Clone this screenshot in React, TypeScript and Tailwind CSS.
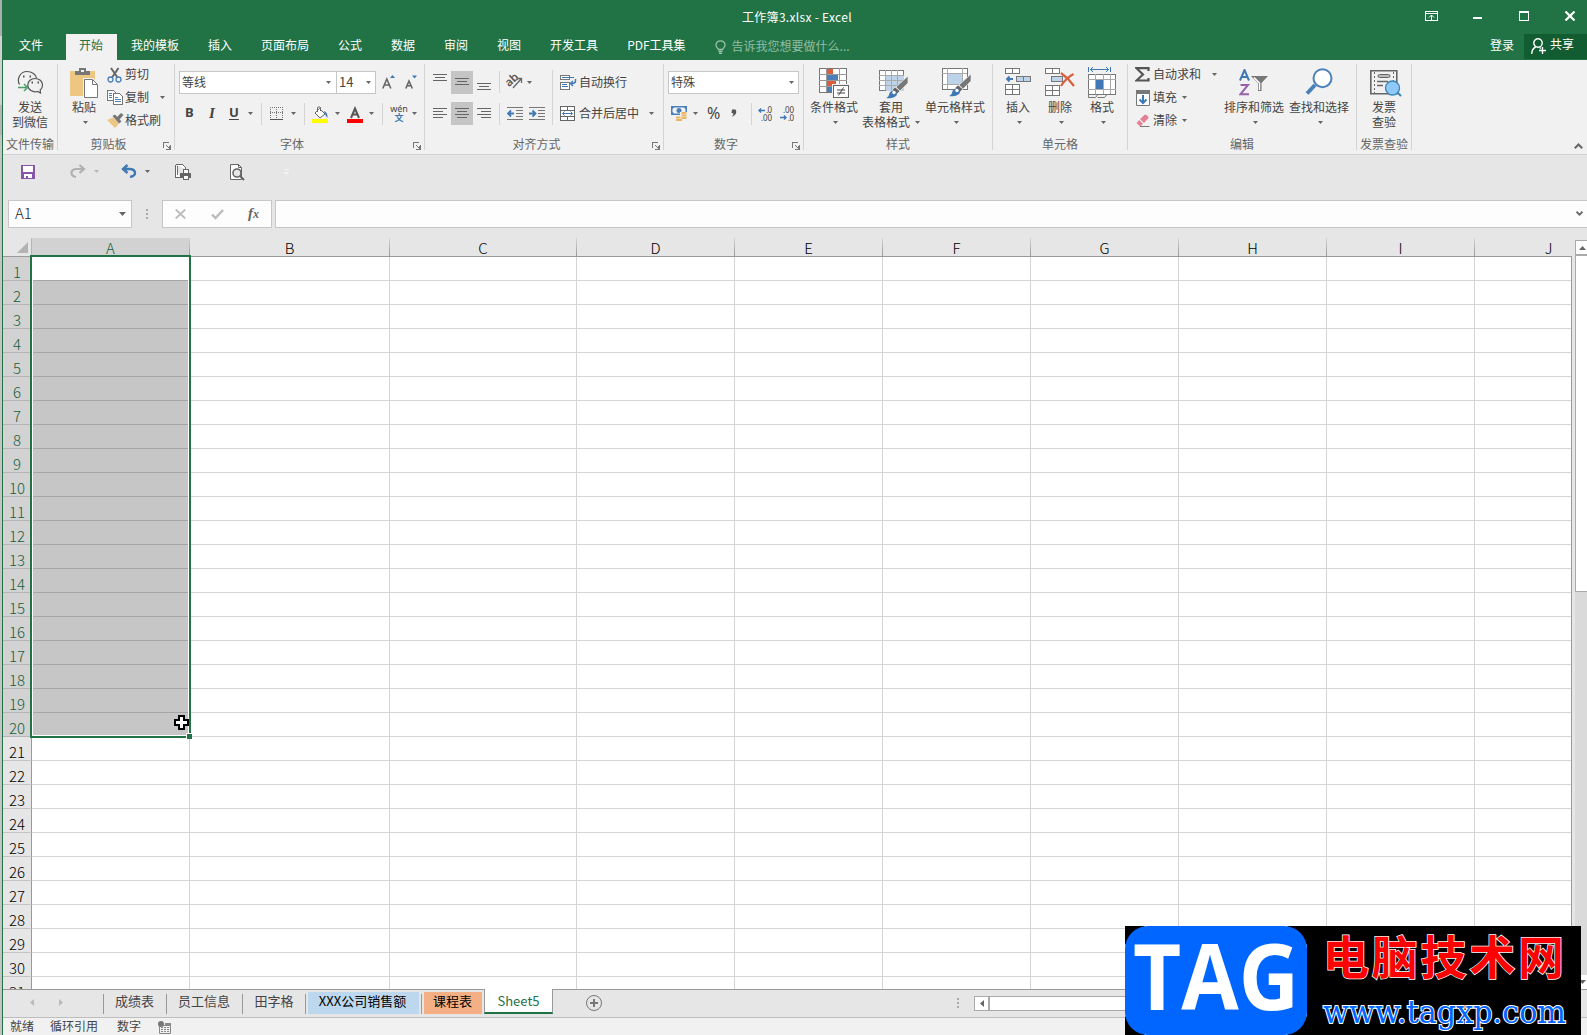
import React from 'react';

const FILE_TABS = ['我的模板', '插入', '页面布局', '公式', '数据', '审阅', '视图', '开发工具', 'PDF工具集'];

const COLUMNS = [
  { name: 'A', width: 158 },
  { name: 'B', width: 200 },
  { name: 'C', width: 187 },
  { name: 'D', width: 158 },
  { name: 'E', width: 148 },
  { name: 'F', width: 148 },
  { name: 'G', width: 148 },
  { name: 'H', width: 148 },
  { name: 'I', width: 148 },
  { name: 'J', width: 148 },
];

const ROWS = Array.from({ length: 31 }, (_, i) => i + 1);
const SELECTED_ROWS = 20;

/* ---------- small shared parts ---------- */

const Caret = ({ className = '', color = '#666' }: { className?: string; color?: string }) => (
  <svg className={`shrink-0 ${className}`} width="5" height="3" viewBox="0 0 5 3">
    <path d="M0 0h5L2.5 3z" fill={color} />
  </svg>
);

const Divider = ({ className = '' }: { className?: string }) => (
  <div className={`w-px shrink-0 bg-[#d4d4d4] ${className}`} />
);

const Launcher = () => (
  <svg width="8" height="8" viewBox="0 0 8 8" fill="none" stroke="#777" shapeRendering="crispEdges">
    <path d="M.5 6V.5H6M7.5 3v4.5H3M3.5 3.5l3 3M6.5 4v3H4" />
  </svg>
);

interface GroupProps {
  label: string;
  className: string;
  launcher?: boolean;
  labelShift?: string;
  children: React.ReactNode;
}

const Group = ({ label, className, launcher, labelShift = '', children }: GroupProps) => (
  <div className={`flex shrink-0 ${className}`}>
    <div className="flex min-w-0 flex-1 flex-col">
      <div className="flex h-[73px] items-start">{children}</div>
      <div className="flex h-[21px] items-center">
        <div className={`flex-1 whitespace-nowrap text-center leading-5 text-[#666] ${labelShift}`}>{label}</div>
        {launcher && (
          <div className="-ml-3 mr-[3px] mt-[5px] w-2">
            <Launcher />
          </div>
        )}
      </div>
    </div>
    <Divider className="mt-1 h-[86px]" />
  </div>
);

interface BigButtonProps {
  icon: React.ReactNode;
  line1: string;
  line2?: string;
  caret?: boolean;
  className: string;
}

const BigButton = ({ icon, line1, line2, caret, className }: BigButtonProps) => (
  <div className={`flex shrink-0 flex-col items-center ${className}`}>
    <div className="flex h-[39px] items-start justify-center">{icon}</div>
    <div className="h-[15px] whitespace-nowrap leading-[15px]">{line1}</div>
    <div className="flex h-[17px] items-center whitespace-nowrap leading-[15px]">
      {line2 && <span className="mb-[2px]">{line2}</span>}
      {caret && <Caret className={line2 ? 'ml-[5px]' : 'ml-[2px]'} />}
    </div>
  </div>
);

const SmallButton = ({ icon, text, children }: { icon: React.ReactNode; text: string; children?: React.ReactNode }) => (
  <div className="flex h-[23px] items-center whitespace-nowrap">
    <div className="flex w-[18px] shrink-0">{icon}</div>
    <span className="mb-[2px]">{text}</span>
    {children}
  </div>
);

/* ---------- ribbon icons ---------- */

const WechatIcon = () => (
  <svg className="mt-[10px]" width="27" height="24" viewBox="0 0 27 24" fill="none" stroke="#555">
    <path d="M2.5 14.5C-.5 9 3 1.5 10 1.5c5 0 9 3 9.500 6.500" strokeWidth="1.200" />
    <path d="M25.500 15c0 2-.8 3.800-2.300 5l.3 3-3-1.500c-4.500 1.300-9.700-1.500-9.700-6.500 0-4 3.300-6.500 7.300-6.500s7.400 2.700 7.400 6.500z" fill="#f1f1f1" strokeWidth="1.200" />
    <path d="M6 6.500h1.500M12.500 6.500H14M14.500 12.500H16M20.500 12.500H22" strokeWidth="1.800" />
    <path d="M1 17.500h9M7 14l3.500 3.500L7 21" stroke="#4ba06a" strokeWidth="1.500" />
  </svg>
);

const PasteIcon = () => (
  <svg className="mt-2" width="29" height="31" viewBox="0 0 29 31">
    <path d="M0 3h25v25H0z" fill="#edc682" />
    <path d="M5 3h4V0h7v3h4v4H5z" fill="#777" />
    <path d="M11 2h3v2h-3z" fill="#f1f1f1" />
    <path d="M13 10h10l6 6v15H13z" fill="#f1f1f1" />
    <path d="M14.500 11.500h8l5 5v13h-13z" fill="#fff" stroke="#777" />
    <path d="M22.500 11.500v5h5" fill="none" stroke="#777" />
  </svg>
);

const CutIcon = () => (
  <svg width="16" height="16" viewBox="0 0 16 16" fill="none">
    <path d="M4 1l6.500 9.500M11.500 1L5 10.500" stroke="#666" strokeWidth="2" />
    <circle cx="3.500" cy="12.500" r="2.500" stroke="#4a7fb8" strokeWidth="1.300" />
    <circle cx="11.500" cy="12.500" r="2.500" stroke="#4a7fb8" strokeWidth="1.300" />
  </svg>
);

const CopyIcon = () => (
  <svg width="16" height="15" viewBox="0 0 16 15" shapeRendering="crispEdges">
    <path d="M.5 .5h6l2 2v8h-8z" fill="#fff" stroke="#777" />
    <path d="M2 3.500h3M2 5.500h3M2 7.500h3" stroke="#4a7fb8" />
    <path d="M6.500 3.500h6l3 3v8h-9z" fill="#fff" stroke="#777" />
    <path d="M8 7.500h3M8 9.500h6M8 11.500h6" stroke="#4a7fb8" />
  </svg>
);

const PainterIcon = () => (
  <svg width="17" height="15" viewBox="0 0 17 15">
    <path d="M0 7l6-2.500 6 6L8 15z" fill="#edc682" />
    <path d="M5.500 3l2.500-1.500 6.500 7-2.500 2zM10 4l4-4 2.500 2-4 4.500z" fill="#777" />
  </svg>
);

const BordersIcon = () => (
  <svg width="13" height="13" viewBox="0 0 13 13" fill="none" stroke="#777" shapeRendering="crispEdges">
    <path d="M0 .5h13M.5 0v11M6.500 0v11M12.500 0v11M0 5.500h13" strokeDasharray="1 1" />
    <path d="M0 12.500h13" stroke="#555" />
  </svg>
);

const FillIcon = () => (
  <svg width="17" height="17" viewBox="0 0 17 17">
    <path d="M7.500 2.500l5.500 5.500-5 4-5-5z" fill="#fff" stroke="#666" />
    <path d="M5.500 6V1.500q1.500-1.500 3 0V5" fill="none" stroke="#666" />
    <path d="M11.500 5q4.500 1 4 7-2-1.500-2.500-4.500z" fill="#3f78b5" />
    <path d="M0 13h16v4H0z" fill="#ff0" />
  </svg>
);

const FontColorIcon = () => (
  <svg width="16" height="17" viewBox="0 0 16 17">
    <path d="M4 12L8 2.500 12 12M5.500 8.500h5" fill="none" stroke="#555" strokeWidth="2" />
    <path d="M0 13h16v4H0z" fill="#f00" />
  </svg>
);

const GrowFontIcon = ({ up }: { up?: boolean }) => (
  <svg width="13" height="14" viewBox="0 0 13 14">
    {up ? (
      <>
        <path d="M.8 13.500L4.800 4l4 9.500M2.500 10h4.700" fill="none" stroke="#666" strokeWidth="1.600" />
        <path d="M8 3l2.500-3L13 3z" fill="#3f78b5" />
      </>
    ) : (
      <>
        <path d="M.8 13.500L4 6l3.300 7.500M2 10.700h4" fill="none" stroke="#666" strokeWidth="1.600" />
        <path d="M7 .5h5l-2.500 3z" fill="#3f78b5" />
      </>
    )}
  </svg>
);

// Paragraph lines, "d" sets which of them are short and on which side
const Lines = ({ d, h = 11 }: { d: string; h?: number }) => (
  <svg className="shrink-0" width="14" height={h} viewBox={`0 0 14 ${h}`} stroke="#666" shapeRendering="crispEdges">
    <path d={d} />
  </svg>
);

const OrientationIcon = () => (
  <svg className="overflow-visible" width="17" height="16" viewBox="0 0 17 16" fill="none">
    <text x="0" y="11.500" fontSize="11.500" fill="#555" fontWeight="600" transform="rotate(-42 5 9)" fontFamily="Noto Sans">
      ab
    </text>
    <path d="M7 15l8-9M15.500 10V5.500H11" stroke="#666" strokeWidth="1.300" />
  </svg>
);

const IndentIcon = ({ right }: { right?: boolean }) => (
  <svg width="16" height="13" viewBox="0 0 16 13" fill="none">
    <path d="M0 .5h16M9 3.500h7M9 6.500h7M9 9.500h7M0 12.500h16" stroke="#777" shapeRendering="crispEdges" />
    <path d={right ? 'M0 6.500h6M3.500 3.500l3 3-3 3' : 'M7 6.500H1M4 3.500l-3 3 3 3'} stroke="#3f78b5" strokeWidth="1.800" />
  </svg>
);

const WrapIcon = () => (
  <svg width="17" height="16" viewBox="0 0 17 16" fill="none">
    <g shapeRendering="crispEdges">
      <path d="M.5 .5h9v4h-9zM.5 7.500h9v7h-9z" fill="#fff" stroke="#777" />
      <path d="M2 2.500h12M2 9.500h5M2 11.500h6" stroke="#3f78b5" />
    </g>
    <path d="M15.500 4v2q0 2.500-4 2.500M13 6l-2.500 2.500L13 11" stroke="#3f78b5" strokeWidth="1.500" />
  </svg>
);

const MergeIcon = () => (
  <svg width="15" height="15" viewBox="0 0 15 15" fill="none">
    <path d="M.5 .5h14v14H.5zM.5 4.500h14M.5 10.500h14M7.500 0v4M7.500 11v4" fill="#fff" stroke="#666" shapeRendering="crispEdges" />
    <path d="M2.500 7.500h10M4.500 5.500l-2 2 2 2M10.500 5.500l2 2-2 2" stroke="#3f78b5" />
  </svg>
);

const CurrencyIcon = () => (
  <svg width="17" height="16" viewBox="0 0 17 16">
    <path d="M0 0h16v9H0z" fill="#4a7fb8" />
    <path d="M3 1.500h10l1.500 1.500v3L13 7.500H3L1.500 6V3z" fill="#f1f1f1" />
    <circle cx="8" cy="4.500" r="2.500" fill="#4a7fb8" />
    <path d="M9 6h8v9h-4v1H4v-5h5z" fill="#f1f1f1" />
    <path d="M10.500 7h5M10.500 9.500h5M10.500 12h5M5 11.500h4.500M5 14h6" stroke="#eab766" strokeWidth="1.900" />
  </svg>
);

const DecimalIcon = ({ less }: { less?: boolean }) => (
  <svg className="overflow-visible" width="16" height="14" viewBox="0 0 16 14" fontSize="8" fill="#444" fontFamily="Noto Sans">
    <text x={less ? 3 : 8} y="6" textLength={less ? 11 : 6}>
      {less ? '.00' : '.0'}
    </text>
    <text x={less ? 8 : 3} y="13.500" textLength={less ? 6 : 11}>
      {less ? '.0' : '.00'}
    </text>
    <path d={less ? 'M0 10.500h6M4 8.500l2 2-2 2' : 'M7 3.500H1M3 1.500l-2 2 2 2'} fill="none" stroke="#3f78b5" strokeWidth="1.400" />
  </svg>
);

const ConditionalIcon = () => (
  <svg className="mt-2" width="31" height="31" viewBox="0 0 31 31" shapeRendering="crispEdges">
    <path d="M.5 .5h27v24H.5z" fill="#fff" stroke="#777" />
    <path d="M8 .5h6v6H8zM8 13h9v5H8z" fill="#d9603f" />
    <path d="M8 7h11v5H8zM8 19h6v5H8z" fill="#4a7fb8" />
    <path d="M0 6.500h28M0 12.500h28M0 18.500h28M7.500 0v24M20.500 0v24" stroke="#999" />
    <path d="M13 16h18v15H13z" fill="#f1f1f1" />
    <path d="M14.500 17.500h15v12h-15z" fill="#fff" stroke="#666" />
    <path d="M18 22h8M18 25h8M24.500 19.500l-5 8" stroke="#444" shapeRendering="auto" />
  </svg>
);

const Brush = () => (
  <>
    <path d="M29 6v7l-8 8-4-4z" fill="#777" stroke="#f1f1f1" strokeWidth=".7" />
    <path d="M16 17l5 4-3 3-5-4z" fill="#666" stroke="#f1f1f1" strokeWidth=".7" />
    <path d="M7 28q3-1 3.500-5 3-4 6-1.500 3.500 3-1 5.500-3.500 2-8.500 1z" fill="#3f78b5" />
    <circle cx="15" cy="22.500" r="1.700" fill="#fff" />
  </>
);

const TableStyleIcon = () => (
  <svg className="ml-[5px] mt-[10px]" width="30" height="29" viewBox="0 0 30 29">
    <g shapeRendering="crispEdges">
      <path d="M.5 .5h24v20H.5z" fill="#fff" stroke="#777" />
      <path d="M7 6h18v15H7z" fill="#bdd3ea" />
      <path d="M0 5.500h25M0 10.500h25M0 15.500h25M6.500 0v20M12.500 0v20M18.500 0v20" stroke="#aaa" />
    </g>
    <Brush />
  </svg>
);

const CellStyleIcon = () => (
  <svg className="ml-[4px] mt-2" width="30" height="30" viewBox="0 0 30 30">
    <g shapeRendering="crispEdges">
      <path d="M.5 .5h25v21H.5z" fill="#fff" stroke="#777" />
      <path d="M0 5.500h25M0 16.500h25M5.500 0v21M20.500 0v21" stroke="#aaa" />
      <path d="M6 6h14v10H6z" fill="#bdd3ea" />
    </g>
    <Brush />
  </svg>
);

const InsertIcon = () => (
  <svg className="mt-2" width="27" height="28" viewBox="0 0 27 28">
    <g shapeRendering="crispEdges" fill="#fff" stroke="#777">
      <path d="M.5 .5h14v5H.5zM7.500 0v5M.5 16.500h14v10H.5zM7.500 16v10M0 21.500h14" />
      <path d="M11.500 8.500h14v5h-14zM18.500 8v5" fill="#bdd3ea" />
    </g>
    <path d="M8 11H2M4.500 8.500L2 11l2.500 2.500" fill="none" stroke="#3f78b5" strokeWidth="1.800" />
  </svg>
);

const DeleteIcon = () => (
  <svg className="mt-2" width="30" height="28" viewBox="0 0 30 28">
    <g shapeRendering="crispEdges" fill="#fff" stroke="#777">
      <path d="M.5 .5h14v5H.5zM7.500 0v5M.5 17.500h14v10H.5zM7.500 17v10M0 22.500h14" />
      <path d="M6.500 8.500h11v5h-11z" fill="#bdd3ea" />
    </g>
    <path d="M16 5q7 5 13 13M28.500 6Q21 10 16 18" fill="none" stroke="#d9603f" strokeWidth="2.200" />
  </svg>
);

const FormatIcon = () => (
  <svg className="mt-[7px]" width="29" height="31" viewBox="0 0 29 31">
    <path d="M.5 0v5M22.500 0v5M2 2.500h19M5 0L2.500 2.500 5 5M18 0l2.500 2.500L18 5" fill="none" stroke="#3f78b5" />
    <g shapeRendering="crispEdges">
      <path d="M.5 7.500h27v20H.5z" fill="#fff" stroke="#777" />
      <path d="M0 12.500h28M0 22.500h28M7.500 7v20M15.500 7v20M22.500 7v20" stroke="#aaa" />
      <path d="M8 13h7v9H8z" fill="#3f78b5" />
    </g>
    <path d="M.5 28v2.500h7l2-2.500M9.500 30.500h7l2-2.500" fill="none" stroke="#777" />
  </svg>
);

const SumIcon = () => (
  <svg width="15" height="15" viewBox="0 0 15 15" fill="none">
    <path d="M13.500 4V1.200H1.500L8 7.500 1.500 13.500h12V11" stroke="#555" strokeWidth="2.200" />
  </svg>
);

const FillDownIcon = () => (
  <svg className="ml-px" width="14" height="16" viewBox="0 0 14 16">
    <path d="M.5 .5h13v15H.5z" fill="#fff" stroke="#777" />
    <path d="M0 0h14v4H0z" fill="#777" />
    <path d="M7 5v8M3.500 9.500L7 13l3.500-3.500" fill="none" stroke="#3f78b5" strokeWidth="2" />
  </svg>
);

const EraserIcon = () => (
  <svg className="ml-px" width="14" height="14" viewBox="0 0 14 14">
    <path d="M4 5l5-4.500q3 .5 3.500 3.500L8 9z" fill="#e58095" />
    <path d="M3.300 6L7 10l-3 2.500L.5 9z" fill="#e58095" />
    <path d="M4 12.500h9.500" stroke="#777" />
  </svg>
);

const SortFilterIcon = () => (
  <svg className="mt-[9px]" width="30" height="27" viewBox="0 0 30 27" fill="none">
    <path d="M1 11.500L5.500 1 10 11.500M2.500 8h6" stroke="#3f78b5" strokeWidth="2" />
    <path d="M1.500 16h7.500L1.500 25.200h8.500" stroke="#9661ad" strokeWidth="2" />
    <path d="M12 7h17l-6.500 7v8H19v-8z" fill="#777" />
    <path d="M15 8.500l5.500 5.500v7" stroke="#fff" strokeWidth="1.500" />
  </svg>
);

const FindIcon = () => (
  <svg className="mt-2" width="28" height="28" viewBox="0 0 28 28" fill="none" stroke="#4a7fb8">
    <path d="M10 17L2 25.500" strokeWidth="4" />
    <circle cx="17.500" cy="10.200" r="9" fill="#fff" strokeWidth="2" />
  </svg>
);

const InvoiceIcon = () => (
  <svg className="ml-[3px] mt-[10px]" width="32" height="27" viewBox="0 0 32 27" fill="none">
    <path d="M.8 .8h26v23H.8z" fill="#f1f1f1" stroke="#666" strokeWidth="1.600" />
    <path d="M4.500 2v21M23.500 2v9" stroke="#666" strokeDasharray="2 2" />
    <rect x="8" y="4.500" width="12" height="3" rx="1.500" fill="#bbb" stroke="#666" />
    <path d="M7 11.500h11M7 15.500h6" stroke="#666" strokeWidth="1.300" />
    <path d="M27 22l4 4" stroke="#3a86b8" strokeWidth="2" />
    <circle cx="22.500" cy="18" r="7" fill="#90c8f8" stroke="#3a86b8" strokeWidth="1.300" />
  </svg>
);

/* ---------- window header ---------- */

const TitleBar = () => (
  <div className="flex h-[34px] items-start text-white">
    <div className="ml-[739px] mt-2 leading-[18px] tracking-[0.3px]">工作簿3.xlsx - Excel</div>
    <svg className="ml-auto mt-[11px]" width="151" height="10" viewBox="0 0 151 10" fill="none" stroke="#fff">
      <g shapeRendering="crispEdges">
        <path d="M.5 .5h12v9H.5zM0 2.500h13M6.500 4v5" />
        <path d="M48 7h9" strokeWidth="2" />
        <path d="M94.500 .5h9v9h-9zM94 1.500h10" />
      </g>
      <path d="M4 6.500L6.500 4 9 6.500" />
      <path d="M140.500 .5l9 9M149.500 .5l-9 9" strokeWidth="2.200" />
    </svg>
    <div className="w-[11px]" />
  </div>
);

const MenuTabs = () => (
  <div className="flex h-[26px] whitespace-nowrap leading-[21px] text-white">
    <div className="w-[63px] pl-[16px]">文件</div>
    <div className="w-[51px] bg-[#f1f1f1] pr-px text-center text-[#217346]">开始</div>
    <div className="ml-[14px] flex gap-[29px]">
      {FILE_TABS.map(tab => (
        <div key={tab}>{tab}</div>
      ))}
    </div>
    <svg className="ml-[29px] mt-[6px]" width="11" height="14" viewBox="0 0 11 14" fill="none" stroke="#9dc3ad" strokeWidth="1.300">
      <path d="M3.500 9.500Q1 7 1 5a4.500 4.200 0 0 1 9 0q0 2-2.500 4.500zM3.500 11.500h4M4 13.300h3" />
    </svg>
    <div className="ml-[6px] leading-[23px] text-[#92bca3]">告诉我您想要做什么...</div>
    <div className="ml-auto w-[34px]">登录</div>
    <div className="flex h-[25px] w-[63px] bg-[#125c31]">
      <svg className="ml-[7px] mt-1" width="16" height="17" viewBox="0 0 16 17" fill="none" stroke="#fff" strokeWidth="1.400">
        <circle cx="7" cy="5" r="4.200" />
        <path d="M.7 16q0-5 4-7M8.500 9.500l1.500 1M11.500 9v7M8 12.500h7" />
      </svg>
      <div className="ml-[3px] leading-[19px]">共享</div>
    </div>
  </div>
);

const Ribbon = () => (
  <div className="flex h-[95px] border-b border-[#d2d2d2] bg-[#f1f1f1] text-[#444]">
    <Group label="文件传输" className="w-[55px]">
      <BigButton className="w-[54px]" icon={<WechatIcon />} line1="发送" line2="到微信" />
    </Group>

    <Group label="剪贴板" className="w-[117px]" launcher labelShift="pr-4">
      <BigButton className="ml-[11px] w-[30px]" icon={<PasteIcon />} line1="粘贴" caret />
      <div className="ml-[8px] mt-[3px]">
        <SmallButton icon={<CutIcon />} text="剪切" />
        <SmallButton icon={<CopyIcon />} text="复制">
          <Caret className="ml-[11px]" />
        </SmallButton>
        <SmallButton icon={<PainterIcon />} text="格式刷" />
      </div>
    </Group>

    <Group label="字体" className="w-[250px]" launcher labelShift="pr-4">
      <div className="ml-1 mt-[11px] flex flex-col gap-2">
        <div className="flex h-[23px]">
          <div className="flex w-[158px] items-center border border-[#c6c6c6] bg-white pb-px pl-[2px] pr-[5px]">
            等线
            <Caret className="ml-auto" />
          </div>
          <div className="-ml-px flex w-10 items-center border border-[#c6c6c6] bg-white pb-px pl-[2px] pr-[4px] text-[13px]">
            14
            <Caret className="ml-auto" />
          </div>
          <div className="ml-[6px] mt-[4px]">
            <GrowFontIcon up />
          </div>
          <div className="ml-[10px] mt-[4px]">
            <GrowFontIcon />
          </div>
        </div>
        <div className="flex h-[23px] items-center">
          <b className="mb-[2px] ml-[6px] w-[24px] font-['Noto_Sans'] text-[13px] font-bold">B</b>
          <i className="mb-px w-[20px] font-['Liberation_Serif'] text-[15px] font-bold">I</i>
          <u className="mb-[2px] w-[9px] font-['Noto_Sans'] text-[13px] font-bold underline-offset-2">U</u>
          <Caret className="ml-[10px]" />
          <Divider className="ml-[8px] h-[22px]" />
          <div className="ml-2">
            <BordersIcon />
          </div>
          <Caret className="ml-2" />
          <Divider className="ml-[8px] h-[22px]" />
          <div className="ml-[7px] mt-px">
            <FillIcon />
          </div>
          <Caret className="ml-[6px]" />
          <div className="ml-[7px] mt-px">
            <FontColorIcon />
          </div>
          <Caret className="ml-[6px]" />
          <Divider className="ml-[8px] h-[22px]" />
          <div className="ml-2 flex w-4 flex-col items-center">
            <span className="h-[8px] font-['Noto_Sans'] text-[9px] leading-[7px]">wén</span>
            <span className="h-[9px] text-[9px] font-bold leading-[10px] text-[#3f78b5]">文</span>
          </div>
          <Caret className="ml-[5px]" />
        </div>
      </div>
    </Group>

    <Group label="对齐方式" className="w-[239px]" launcher labelShift="pr-4">
      <div className="mt-[11px] flex flex-col gap-2">
        <div className="flex h-[23px] items-start">
          <div className="w-[26px] pl-[8px] pt-[3px]">
            <Lines h={8} d="M0 .5h14M2 3.500h10M0 6.500h14" />
          </div>
          <div className="flex h-full w-[22px] justify-center bg-[#c5c5c5] pt-[7px]">
            <Lines h={8} d="M0 .5h14M2 3.500h10M0 6.500h14" />
          </div>
          <div className="w-[26px] pl-1 pt-[12px]">
            <Lines h={8} d="M0 .5h14M2 3.500h10M0 6.500h14" />
          </div>
          <Divider className="h-[22px]" />
          <div className="ml-[6px] mt-[2px]">
            <OrientationIcon />
          </div>
          <Caret className="ml-[4px] mt-[10px]" />
        </div>
        <div className="flex h-[23px] items-center">
          <div className="w-[26px] pl-[8px]">
            <Lines d="M0 .5h14M0 3.500h10M0 6.500h14M0 9.500h10" />
          </div>
          <div className="flex h-full w-[22px] items-center justify-center bg-[#c5c5c5]">
            <Lines d="M0 .5h14M2 3.500h10M0 6.500h14M2 9.500h10" />
          </div>
          <div className="w-[26px] pl-1">
            <Lines d="M0 .5h14M4 3.500h10M0 6.500h14M4 9.500h10" />
          </div>
          <Divider className="h-[22px]" />
          <div className="ml-[7px]">
            <IndentIcon />
          </div>
          <div className="ml-[6px]">
            <IndentIcon right />
          </div>
        </div>
      </div>
      <Divider className="ml-[7px] mt-[10px] h-[55px]" />
      <div className="ml-[7px] mt-[11px] flex flex-col gap-2">
        <div className="flex h-[23px] items-center">
          <WrapIcon />
          <span className="mb-[2px] ml-[2px]">自动换行</span>
        </div>
        <div className="flex h-[23px] items-center">
          <MergeIcon />
          <span className="mb-[2px] ml-[4px]">合并后居中</span>
          <Caret className="ml-[10px]" />
        </div>
      </div>
    </Group>

    <Group label="数字" className="w-[140px]" launcher labelShift="pr-4">
      <div className="ml-1 mt-[11px] flex flex-col gap-2">
        <div className="flex h-[23px] w-[131px] items-center border border-[#c6c6c6] bg-white pb-px pl-[2px] pr-[4px]">
          特殊
          <Caret className="ml-auto" />
        </div>
        <div className="flex h-[23px] items-center">
          <div className="ml-[3px]">
            <CurrencyIcon />
          </div>
          <Caret className="ml-[5px]" />
          <span className="mb-[2px] ml-[9px] w-[19px] font-['Noto_Sans'] text-[16px]">%</span>
          <svg className="mb-px ml-[5px]" width="6" height="8" viewBox="0 0 6 8">
            <path d="M1 .5h3.500q2.500 4-3 7H1q1.500-2 1.500-3L.5 4z" fill="#555" />
          </svg>
          <Divider className="ml-[14px] h-[22px]" />
          <div className="ml-[6px]">
            <DecimalIcon />
          </div>
          <div className="ml-[6px]">
            <DecimalIcon less />
          </div>
        </div>
      </div>
    </Group>

    <Group label="样式" className="w-[189px]">
      <BigButton className="ml-[5px] w-[50px]" icon={<ConditionalIcon />} line1="条件格式" caret />
      <BigButton className="ml-[3px] w-[58px]" icon={<TableStyleIcon />} line1="套用" line2="表格格式" caret />
      <BigButton className="ml-[4px] w-[62px]" icon={<CellStyleIcon />} line1="单元格样式" caret />
    </Group>

    <Group label="单元格" className="w-[135px]">
      <BigButton className="ml-[9px] w-[32px]" icon={<InsertIcon />} line1="插入" caret />
      <BigButton className="ml-[10px] w-[32px]" icon={<DeleteIcon />} line1="删除" caret />
      <BigButton className="ml-[10px] w-[32px]" icon={<FormatIcon />} line1="格式" caret />
    </Group>

    <Group label="编辑" className="w-[229px]">
      <div className="ml-[7px] mt-[3px] w-[84px]">
        <SmallButton icon={<SumIcon />} text="自动求和">
          <Caret className="ml-[11px]" />
        </SmallButton>
        <SmallButton icon={<FillDownIcon />} text="填充">
          <Caret className="ml-[5px]" />
        </SmallButton>
        <SmallButton icon={<EraserIcon />} text="清除">
          <Caret className="ml-[5px]" />
        </SmallButton>
      </div>
      <BigButton className="ml-[5px] w-[60px]" icon={<SortFilterIcon />} line1="排序和筛选" caret />
      <BigButton className="ml-[5px] w-[60px]" icon={<FindIcon />} line1="查找和选择" caret />
    </Group>

    <Group label="发票查验" className="w-[55px]">
      <BigButton className="w-[54px]" icon={<InvoiceIcon />} line1="发票" line2="查验" />
    </Group>

    <svg className="ml-auto mr-1 mt-[83px]" width="9" height="6" viewBox="0 0 9 6" fill="none" stroke="#666" strokeWidth="2">
      <path d="M.8 5.200l3.700-3.700 3.700 3.700" />
    </svg>
  </div>
);

/* ---------- quick access + formula bar ---------- */

const QuickAccess = () => (
  <div className="flex h-[45px] items-start pt-[9px]">
    <svg className="ml-[18px] mt-[1px]" width="14" height="14" viewBox="0 0 14 14" shapeRendering="crispEdges">
      <path d="M0 0h14v14H0z" fill="#8656a8" />
      <path d="M2 1h10v6H2zM3 9h8v4H3z" fill="#fff" />
      <path d="M5 11h2v2H5z" fill="#8656a8" />
    </svg>
    <svg className="ml-[35px]" width="16" height="14" viewBox="0 0 16 14" fill="none" stroke="#b0b0b0" strokeWidth="2.200">
      <path d="M14 5H6Q1.500 5.500 1.500 9q0 3 4.500 4M9.500 1l4.500 4-4.500 4" />
    </svg>
    <Caret className="ml-[8px] mt-[6px]" color="#b5b5b5" />
    <svg className="ml-[22px]" width="16" height="14" viewBox="0 0 16 14" fill="none" stroke="#3f78b5" strokeWidth="2.400">
      <path d="M2 5h7q5 .5 5 4 0 3-5 4M6.500 1L2 5l4.500 4" />
    </svg>
    <Caret className="ml-[8px] mt-[6px]" />
    <svg className="ml-[25px]" width="17" height="17" viewBox="0 0 17 17" fill="none" stroke="#666" shapeRendering="crispEdges">
      <path d="M.5 .5h7l3 3v2M.5 .5v13H5" fill="#fff" />
      <path d="M2.500 2v9" stroke="#3f78b5" />
      <path d="M8.500 5.500h5v4h-5z" fill="#fff" />
      <path d="M5 9h11v5H5z" fill="#666" stroke="none" />
      <path d="M8.500 11.500h5v4h-5z" fill="#fff" />
    </svg>
    <svg className="ml-[38px]" width="15" height="17" viewBox="0 0 15 17" fill="none" stroke="#666">
      <path d="M.5 .5h8l3 3v12H.5z" fill="#fff" />
      <path d="M8.500 .5v3h3" />
      <circle cx="7" cy="9" r="4" fill="#e6e6e6" strokeWidth="1.600" />
      <path d="M10 12l4 4" strokeWidth="2.200" />
    </svg>
    <div className="ml-[39px] mt-[5px] flex flex-col gap-[2px]">
      <div className="h-px w-[5px] bg-[#f4f4f4]" />
      <Caret color="#f4f4f4" />
    </div>
  </div>
);

const FormulaBar = () => (
  <div className="flex h-[38px] pl-[5px]">
    <div className="flex h-7 w-[124px] items-center border border-[#c6c6c6] bg-[#fdfdfd] pb-px pl-[6px] pr-[5px] text-[15px] font-light text-[#222]">
      A1
      <svg className="ml-auto" width="7" height="4" viewBox="0 0 7 4">
        <path d="M0 0h7L3.500 4z" fill="#666" />
      </svg>
    </div>
    <div className="ml-[14px] mt-[9px] flex h-[10px] w-[2px] flex-col justify-between">
      <div className="h-[2px] bg-[#aaa]" />
      <div className="h-[2px] bg-[#aaa]" />
      <div className="h-[2px] bg-[#aaa]" />
    </div>
    <div className="ml-[14px] flex h-7 w-[110px] items-center border border-[#c6c6c6] bg-[#fdfdfd]">
      <svg className="ml-[12px]" width="11" height="10" viewBox="0 0 11 10" stroke="#bbb" strokeWidth="1.800">
        <path d="M.7 .5l9.500 9M10.200 .5l-9.500 9" />
      </svg>
      <svg className="ml-[25px]" width="13" height="11" viewBox="0 0 13 11" fill="none" stroke="#bbb" strokeWidth="2.400">
        <path d="M1 5.500L4.500 9 12 1" />
      </svg>
      <span className="mb-[2px] ml-[24px] font-['Liberation_Serif'] text-[15px] font-bold italic leading-none text-[#666]">
        f<span className="text-[12px]">x</span>
      </span>
    </div>
    <div className="ml-[3px] flex h-7 flex-1 items-center justify-end border border-r-0 border-[#c6c6c6] bg-[#fdfdfd] pb-[2px] pr-1">
      <svg width="7" height="5" viewBox="0 0 7 5" fill="none" stroke="#666" strokeWidth="1.800">
        <path d="M.5 .7l3 3 3-3" />
      </svg>
    </div>
  </div>
);

/* ---------- sheet ---------- */

const ColumnHeaders = () => (
  <div className="flex h-[19px] border-b border-[#999] text-[15px] font-light text-black">
    <div className="flex w-[29px] shrink-0 justify-end border-r border-[#b5b5b5] pr-[3px] pt-1">
      <svg width="11" height="11" viewBox="0 0 11 11">
        <path d="M11 0v11H0z" fill="#b3b3b3" />
      </svg>
    </div>
    {COLUMNS.map(col => (
      <div key={col.name} className="flex shrink-0" style={{ width: col.width }}>
        <div className={`flex-1 text-center leading-[20px] ${col.name === 'A' ? 'bg-[#d2d2d2] text-[#12613a]' : ''}`}>
          {col.name}
        </div>
        <div className="w-px bg-gradient-to-b from-[#d5d5d5] to-[#999]" />
      </div>
    ))}
  </div>
);

const Grid = () => (
  <div className="relative h-[732px]">
    <div className="h-full overflow-hidden">
      {ROWS.map(row => {
        const selected = row <= SELECTED_ROWS;
        return (
          <div key={row} className="flex h-6">
            <div
              className={`w-[29px] shrink-0 border-b border-r pt-[4px] text-center text-[15px] font-light leading-[21px] ${
                selected ? 'border-[#b5b5b5] bg-[#d2d2d2] text-[#12613a]' : 'border-b-[#c4c4c4] border-r-[#999] text-black'
              }`}
            >
              {row}
            </div>
            {COLUMNS.map(col => (
              <div
                key={col.name}
                className={`shrink-0 border-b ${
                  col.name === 'A' && selected
                    ? row === 1
                      ? 'border-[#a6a6a6] bg-white'
                      : 'border-[#a6a6a6] bg-[#c6c6c6]'
                    : 'border-r border-[#d4d4d4] bg-white'
                }`}
                style={{ width: col.width }}
              />
            ))}
          </div>
        );
      })}
    </div>
    {/* selection frame with its fill handle */}
    <div className="absolute -top-[2px] left-[27px] h-[483px] w-[161px] border-2 border-[#217346]">
      <div className="h-full border border-white" />
      <div className="absolute -bottom-[3px] -right-[3px] h-[6px] w-[6px] border-l border-t border-white bg-[#217346]" />
    </div>
    <svg className="absolute left-[171px] top-[458px]" width="15" height="15" viewBox="0 0 15 15" shapeRendering="crispEdges">
      <path d="M5 1h5v4h4v5h-4v4H5v-4H1V5h4z" fill="#fff" stroke="#000" strokeWidth="1.500" />
    </svg>
  </div>
);

const VerticalScroll = () => (
  <div className="flex flex-1 flex-col pl-[3px] pt-[2px]">
    <div className="flex h-[15px] items-center justify-center border border-r-0 border-[#aaa] bg-white pl-[2px]">
      <svg width="7" height="4" viewBox="0 0 7 4">
        <path d="M0 4h7L3.500 0z" fill="#666" />
      </svg>
    </div>
    <div className="h-[337px] border border-r-0 border-[#aaa] bg-white" />
    <div className="flex-1 bg-[#dadada]" />
    <div className="flex h-[14px] items-center justify-center bg-white pl-[3px]">
      <svg width="7" height="4" viewBox="0 0 7 4">
        <path d="M0 0h7L3.500 4z" fill="#666" />
      </svg>
    </div>
  </div>
);

const SheetTabs = () => (
  <div className="flex h-[29px] items-start border-b border-t border-b-[#bdbdbd] border-t-[#999] text-[13px] text-[#444]">
    <svg className="ml-[27px] mt-[9px]" width="33" height="7" viewBox="0 0 33 7" fill="#bbb">
      <path d="M4 0v7L0 3.500zM29 0v7l4-3.500z" />
    </svg>
    <div className="ml-[40px] mt-1 h-5 w-px bg-[#999]" />
    <div className="w-[62px] pr-px text-center leading-[22px]">成绩表</div>
    <div className="mt-1 h-5 w-px bg-[#999]" />
    <div className="w-[75px] pr-px text-center leading-[22px]">员工信息</div>
    <div className="mt-1 h-5 w-px bg-[#999]" />
    <div className="w-[62px] text-center leading-[22px]">田字格</div>
    <div className="mt-1 h-5 w-px bg-[#999]" />
    <div className="ml-[2px] mt-[2px] h-[22px] w-[111px] bg-[#bdd7ee] pr-[2px] text-center leading-[18px] text-black">XXX公司销售额</div>
    <div className="ml-[2px] mt-1 h-5 w-px bg-[#999]" />
    <div className="ml-[2px] mt-[2px] h-[22px] w-[58px] bg-[#f4b084] pr-px text-center leading-[18px] text-black">课程表</div>
    <div className="-mt-px ml-[2px] h-[25px] w-[69px] border-b-2 border-l border-r border-[#999] border-b-[#217346] bg-white text-center leading-[23px] text-[#217346]">
      Sheet5
    </div>
    <svg className="ml-[33px] mt-[5px]" width="16" height="16" viewBox="0 0 16 16" fill="none" stroke="#777">
      <circle cx="8" cy="8" r="7.500" />
      <path d="M8 4v8M4 8h8" strokeWidth="2" />
    </svg>
    <div className="ml-[355px] mt-2 flex h-[10px] w-[2px] flex-col justify-between">
      <div className="h-[2px] bg-[#aaa]" />
      <div className="h-[2px] bg-[#aaa]" />
      <div className="h-[2px] bg-[#aaa]" />
    </div>
    <div className="ml-[15px] mt-[6px] flex h-[15px] w-[15px] items-center justify-center border border-[#aaa] bg-white">
      <svg width="4" height="7" viewBox="0 0 4 7">
        <path d="M4 0v7L0 3.500z" fill="#666" />
      </svg>
    </div>
    <div className="mr-5 mt-[6px] h-[15px] flex-1 border border-[#aaa] bg-white" />
  </div>
);

const StatusBar = () => (
  <div className="flex h-[17px] bg-[#f1f1f1] leading-[16px] text-[#444]">
    <div className="ml-[7px] w-10">就绪</div>
    <div className="w-[67px]">循环引用</div>
    <div className="w-[41px]">数字</div>
    <svg className="mt-[3px]" width="13" height="13" viewBox="0 0 13 13">
      <path d="M1.500 4.500h11v8h-11z" fill="#f1f1f1" stroke="#888" />
      <path d="M7 2h6v3H7z" fill="#888" />
      <path d="M3 6.500h9M3 8.500h9M3 10.500h9" stroke="#888" strokeDasharray="2 1" />
      <circle cx="3" cy="3" r="3" fill="#777" />
    </svg>
  </div>
);

const SiteBadge = () => (
  <svg className="absolute bottom-0 right-[6px]" width="456" height="109" viewBox="0 0 456 109">
    <path d="M0 0h456v109H0z" fill="#000" />
    <path d="M20 0H162L182 19V90L162 109H20L0 90V19z" fill="#fff" />
    <rect x="0" y="0" width="182" height="109" rx="23" fill="#0066ff" />
    <text x="8" y="84" fontFamily="Open Sans" fontWeight="700" fontSize="91" fill="#fff" textLength="166" lengthAdjust="spacingAndGlyphs">
      TAG
    </text>
    <text
      x="198"
      y="48"
      fontFamily="Noto Sans CJK SC"
      fontWeight="700"
      fontSize="46"
      fill="#f00"
      stroke="#fff"
      strokeWidth="1.500"
      paintOrder="stroke"
      textLength="241"
    >
      电脑技术网
    </text>
    <text
      x="198"
      y="97"
      fontFamily="DejaVu Serif"
      fontSize="31"
      fill="#0066ff"
      stroke="#fff"
      strokeWidth="2"
      paintOrder="stroke"
      textLength="243"
      lengthAdjust="spacingAndGlyphs"
    >
      www.tagxp.com
    </text>
  </svg>
);

const App: React.FC = () => {
  return (
    <div className="relative flex h-[1035px] w-[1587px] overflow-hidden bg-[#e6e6e6] font-['Noto_Sans_CJK_SC',sans-serif] text-[12px]">
      {/* sliver of the window behind */}
      <div className="flex w-[3px] shrink-0 flex-col border-r border-[#217346] bg-[#c4c4c4]">
        <div className="h-9 bg-[#a9b0ac]" />
        <div className="h-[69px] bg-[#d0d0d0]" />
        <div className="h-[30px] bg-[#b5b5b5]" />
      </div>

      <div className="flex min-w-0 flex-1 flex-col">
        <header className="bg-[#217346]">
          <TitleBar />
          <MenuTabs />
        </header>
        <Ribbon />
        <QuickAccess />
        <FormulaBar />

        <main className="flex h-[751px]">
          <div className="w-[1569px] shrink-0">
            <div className="overflow-hidden">
              <ColumnHeaders />
            </div>
            <div className="w-[1569px] overflow-x-clip border-r border-[#999]">
              <Grid />
            </div>
          </div>
          <VerticalScroll />
        </main>

        <SheetTabs />
        <StatusBar />
      </div>

      <SiteBadge />
    </div>
  );
};

export default App;
